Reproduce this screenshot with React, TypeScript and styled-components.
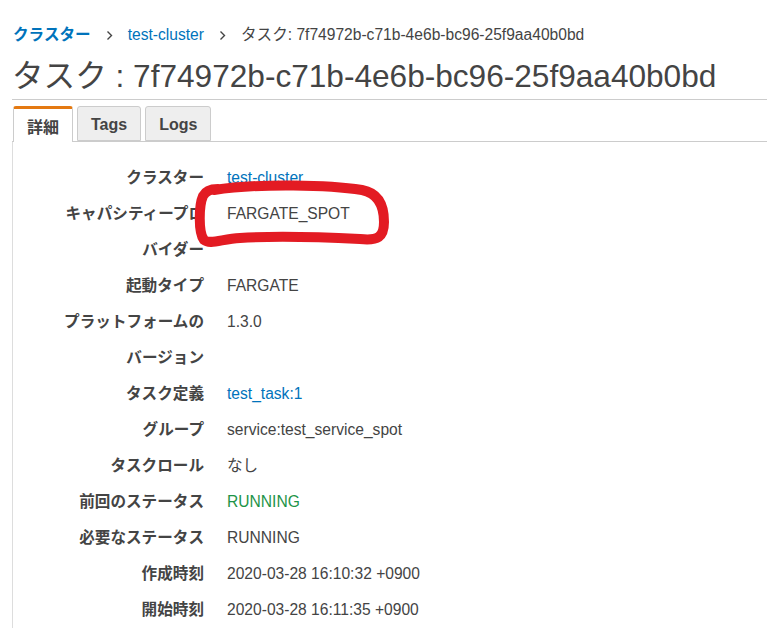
import React from "react";
import styled, { createGlobalStyle } from "styled-components";

const Global = createGlobalStyle`
  html, body { margin: 0; padding: 0; background: #fff; }
  body {
    font-family: "Liberation Sans", Arial, "Noto Sans CJK JP", sans-serif;
    color: #444;
    -webkit-font-smoothing: antialiased;
  }
`;

const Root = styled.div`
  position: relative;
  width: 767px;
  height: 628px;
  overflow: hidden;
  padding-left: 12px;
  box-sizing: border-box;
`;

const Breadcrumb = styled.nav`
  display: flex;
  align-items: center;
  height: 20px;
  margin-top: 25px;
  padding-left: 1px;
  font-size: 15.6px;
  line-height: 20px;
  white-space: nowrap;
`;

const Crumb = styled.a<{ $bold?: boolean }>`
  color: #0073bb;
  text-decoration: none;
  font-weight: ${(p) => (p.$bold ? 700 : 400)};
`;

const Current = styled.span`
  color: #444;
`;

const Sep = styled.span`
  display: inline-flex;
  align-items: center;
  justify-content: center;
  width: 37px;
  color: #444;
`;

const Title = styled.h1`
  margin: 11px 0 0 0;
  font-size: 31.6px;
  line-height: 40px;
  font-weight: 400;
  color: #444;
  padding-bottom: 3px;
  border-bottom: 1px solid #ccc;
  white-space: nowrap;
`;

const TabList = styled.div`
  display: flex;
  gap: 4px;
  margin-top: 6px;
  padding-left: 1px;
  height: 35px;
  border-bottom: 1px solid #ccc;
  align-items: flex-end;
`;

const Tab = styled.div<{ $active?: boolean }>`
  box-sizing: border-box;
  height: ${(p) => (p.$active ? "36px" : "35px")};
  margin-bottom: ${(p) => (p.$active ? "-1px" : "0")};
  padding: 0 13px;
  display: flex;
  align-items: center;
  justify-content: center;
  font-size: 16px;
  font-weight: 700;
  color: #444;
  background: ${(p) => (p.$active ? "#fff" : "#eee")};
  border: 1px solid #ccc;
  border-bottom: ${(p) => (p.$active ? "none" : "1px solid #ccc")};
  border-top: ${(p) => (p.$active ? "3px solid #e47911" : "1px solid #ccc")};
  border-radius: 3px 3px 0 0;
  padding-top: ${(p) => (p.$active ? "0" : "2px")};
`;

const Panel = styled.div`
  border-left: 1px solid #ddd;
  padding-top: 18px;
  height: 500px;
`;

const Grid = styled.dl`
  display: grid;
  grid-template-columns: 152px 1fr;
  column-gap: 23px;
  margin: 0;
  padding-left: 39px;
  font-size: 15.6px;
  line-height: 36px;
`;

const Label = styled.dt`
  margin: 0;
  text-align: right;
  font-weight: 700;
  color: #444;
`;

const Value = styled.dd<{ $tone?: "link" | "ok" | "plain" }>`
  margin: 0;
  white-space: nowrap;
  color: ${(p) =>
    p.$tone === "link" ? "#0073bb" : p.$tone === "ok" ? "#1d9448" : "#444"};
`;

const Overlay = styled.svg`
  position: absolute;
  left: 0;
  top: 0;
  pointer-events: none;
`;

const Chevron = () => (
  <svg width="7" height="11" viewBox="0 0 7 11">
    <polyline
      points="1.5,1.5 5.5,5.5 1.5,9.5"
      fill="none"
      stroke="#444"
      strokeWidth="1.4"
    />
  </svg>
);

type Row = { label: string; value: string; tone?: "link" | "ok" | "plain" };

const rows: Row[] = [
  { label: "クラスター", value: "test-cluster", tone: "link" },
  { label: "キャパシティープロバイダー", value: "FARGATE_SPOT" },
  { label: "起動タイプ", value: "FARGATE" },
  { label: "プラットフォームのバージョン", value: "1.3.0" },
  { label: "タスク定義", value: "test_task:1", tone: "link" },
  { label: "グループ", value: "service:test_service_spot" },
  { label: "タスクロール", value: "なし" },
  { label: "前回のステータス", value: "RUNNING", tone: "ok" },
  { label: "必要なステータス", value: "RUNNING" },
  { label: "作成時刻", value: "2020-03-28 16:10:32 +0900" },
  { label: "開始時刻", value: "2020-03-28 16:11:35 +0900" },
];

export default function App() {
  return (
    <>
      <Global />
      <Root>
        <Breadcrumb>
          <Crumb $bold href="#">クラスター</Crumb>
          <Sep>
            <Chevron />
          </Sep>
          <Crumb href="#">test-cluster</Crumb>
          <Sep>
            <Chevron />
          </Sep>
          <Current>タスク: 7f74972b-c71b-4e6b-bc96-25f9aa40b0bd</Current>
        </Breadcrumb>
        <Title>タスク : 7f74972b-c71b-4e6b-bc96-25f9aa40b0bd</Title>
        <TabList>
          <Tab $active>詳細</Tab>
          <Tab>Tags</Tab>
          <Tab>Logs</Tab>
        </TabList>
        <Panel>
          <Grid>
            {rows.map((r) => (
              <React.Fragment key={r.label}>
                <Label>{r.label}</Label>
                <Value $tone={r.tone}>{r.value}</Value>
              </React.Fragment>
            ))}
          </Grid>
        </Panel>
        <Overlay width="767" height="628" viewBox="0 0 767 628">
          <path
            d="M 214 190 C 260 183, 330 185, 362 190 C 378 193, 384 205, 384 222 C 384 237, 378 241, 360 239 C 320 237, 270 236, 240 238 C 222 239, 210 245, 204 240 C 198 232, 199 205, 203 196 C 206 190, 212 189, 218 189"
            fill="none"
            stroke="#e31b23"
            strokeWidth="10"
            strokeLinecap="round"
            strokeLinejoin="round"
          />
        </Overlay>
      </Root>
    </>
  );
}
